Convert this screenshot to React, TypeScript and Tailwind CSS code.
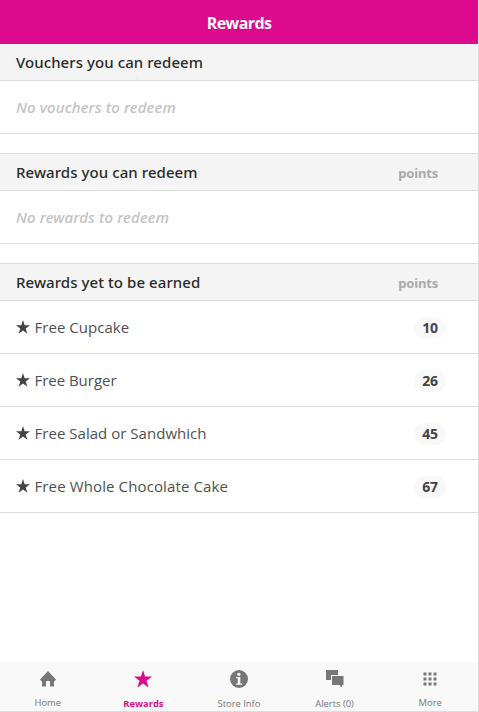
import React from 'react';

interface Reward {
  name: string;
  points: number;
  tracking: string;
}

const rewards: Reward[] = [
  { name: 'Free Cupcake', points: 10, tracking: 'tracking-[0.03px]' },
  { name: 'Free Burger', points: 26, tracking: 'tracking-[-0.03px]' },
  { name: 'Free Salad or Sandwhich', points: 45, tracking: 'tracking-[0.03px]' },
  { name: 'Free Whole Chocolate Cake', points: 67, tracking: 'tracking-[0.12px]' },
];

function StarIcon({ className }: { className: string }) {
  return (
    <svg viewBox="0 0 18 18" className={className} fill="currentColor">
      <path d="M9 0L11.1 6.6H18L12.5 10.8L14.6 17.6L9 13.4L3.4 17.6L5.5 10.8L0 6.6H6.9Z" />
    </svg>
  );
}

function HomeIcon() {
  return (
    <svg viewBox="0 0 16 16" className="h-4 w-4" fill="currentColor">
      <path d="M8 0L16 8.5L15 10H14V15.5H10V10H6V15.5H2V10H1L0 8.5Z" />
    </svg>
  );
}

function InfoIcon() {
  return (
    <svg viewBox="0 0 18 18" className="h-[18px] w-[18px]">
      <circle cx="9" cy="9" r="9" fill="currentColor" />
      <circle cx="8.9" cy="4.3" r="1.6" fill="#f8f8f8" />
      <path d="M6.2 7H10.3V13.6H12V14.8H6.2V13.6H7.8V8.2H6.2Z" fill="#f8f8f8" />
    </svg>
  );
}

function ChatIcon() {
  return (
    <svg viewBox="0 0 18 18" className="h-[18px] w-[18px]" fill="currentColor">
      <path d="M0 0H12V5H5V10H0Z" />
      <path d="M6 6H17.5V15H16V17.5L13.5 15H6Z" />
    </svg>
  );
}

function GridIcon() {
  const dots = [0, 5, 10];
  return (
    <svg viewBox="0 0 14 14" className="h-3.5 w-3.5" fill="currentColor">
      {dots.map(y => dots.map(x => <rect key={`${x}-${y}`} x={x + 0.5} y={y + 0.5} width="3" height="3" />))}
    </svg>
  );
}

function SectionHeader({ title, points }: { title: string; points?: boolean }) {
  return (
    <div className="flex h-[37px] items-center justify-between border-b border-[#dddddd] bg-[#f4f4f4] pr-10 pl-4">
      <h2 className="font-['Noto_Sans',sans-serif] text-[15px] leading-5 font-medium tracking-[0.07px] whitespace-nowrap text-[#2b2b2b]">
        {title}
      </h2>
      {points && <span className="pt-px font-['Noto_Sans',sans-serif] text-[13px] leading-5 font-bold tracking-[-0.2px] text-[#aaaaaa]">points</span>}
    </div>
  );
}

function EmptyRow({ text }: { text: string }) {
  return (
    <div className="flex h-[53px] items-center border-b border-[#dddddd] pl-4 font-['Noto_Sans',sans-serif] text-[15px] leading-5 font-medium tracking-[0.15px] text-[#c2c2c2] italic">
      {text}
    </div>
  );
}

function Tab({ icon, label, active }: { icon: React.ReactNode; label: string; active?: boolean }) {
  return (
    <button className={`flex flex-1 flex-col items-center pt-2 ${active ? 'font-bold text-[#dc0a8c]' : 'text-[#777777]'}`}>
      <span className="flex h-[18px] items-center">{icon}</span>
      <span className="mt-2 text-[9.4px] leading-4">{label}</span>
    </button>
  );
}

export default function App() {
  return (
    <div className="flex h-[712px] w-[479px] flex-col overflow-hidden border-r border-b border-[#dddddd] bg-white font-['Open_Sans','Noto_Sans',sans-serif]">
      <header className="flex h-11 shrink-0 items-center justify-center bg-[#dc0a8c] pt-0.5">
        <h1 className="text-base leading-5 font-bold tracking-[-0.6px] text-white">Rewards</h1>
      </header>

      <main className="flex-1">
        <section>
          <SectionHeader title="Vouchers you can redeem" />
          <EmptyRow text="No vouchers to redeem" />
        </section>

        <section className="mt-[19px] border-t border-[#dddddd]">
          <SectionHeader title="Rewards you can redeem" points />
          <EmptyRow text="No rewards to redeem" />
        </section>

        <section className="mt-[19px] border-t border-[#dddddd]">
          <SectionHeader title="Rewards yet to be earned" points />
          {rewards.map(reward => (
            <div key={reward.name} className="flex h-[53px] items-center border-b border-[#dddddd] pr-8 pl-4 text-[#444444]">
              <StarIcon className="mr-[4.5px] h-3.5 w-3.5" />
              <span className={`flex-1 text-[15px] leading-5 text-[#505050] ${reward.tracking}`}>{reward.name}</span>
              <span className="mt-0.5 flex h-[22px] w-8 items-center justify-center rounded-[11px] bg-[#f8f8f8] text-sm font-bold tracking-[-0.2px]">
                {reward.points}
              </span>
            </div>
          ))}
        </section>
      </main>

      <nav className="flex h-[49px] shrink-0 bg-[#f8f8f8]">
        <Tab icon={<HomeIcon />} label="Home" />
        <Tab icon={<StarIcon className="h-[18px] w-[18px]" />} label="Rewards" active />
        <Tab icon={<InfoIcon />} label="Store Info" />
        <Tab icon={<ChatIcon />} label="Alerts (0)" />
        <Tab icon={<GridIcon />} label="More" />
      </nav>
    </div>
  );
}
